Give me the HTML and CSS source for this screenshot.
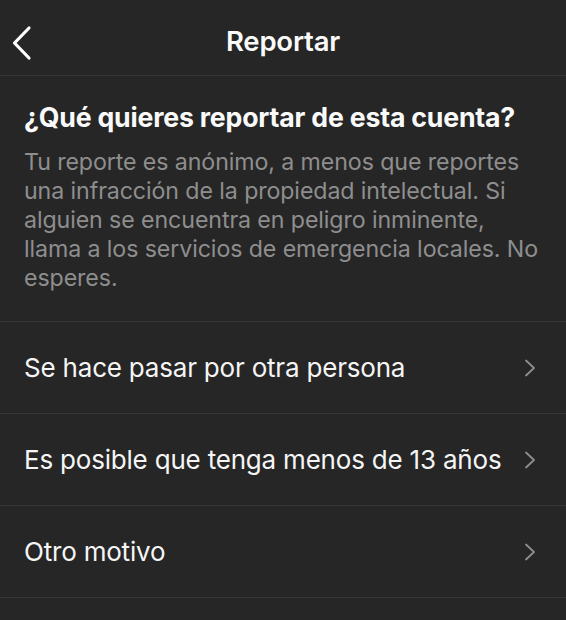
FILE: index.html
```html
<!DOCTYPE html>
<html lang="es">
<head>
<meta charset="utf-8">
<link rel="stylesheet" href="styles.css">
</head>
<body>
<div class="screen">
  <header class="nav">
    <svg class="back" width="22" height="36" viewBox="0 0 22 36"><path d="M18 3 L3.5 18 L18 33" fill="none" stroke="#fff" stroke-width="3.2" stroke-linecap="round" stroke-linejoin="round"/></svg>
    <h1 class="title">Reportar</h1>
  </header>
  <section class="intro">
    <h2 class="question">¿Qué quieres reportar de esta cuenta?</h2>
    <p class="desc">Tu reporte es anónimo, a menos que reportes<br>una infracción de la propiedad intelectual. Si<br>alguien se encuentra en peligro inminente,<br>llama a los servicios de emergencia locales. No<br>esperes.</p>
  </section>
  <ul class="options">
    <li class="option"><span>Se hace pasar por otra persona</span><svg class="chev" width="12" height="18" viewBox="0 0 12 18"><path d="M2 1.5 L10 9 L2 16.5" fill="none" stroke="#8e8e8e" stroke-width="1.8" stroke-linecap="round" stroke-linejoin="round"/></svg></li>
    <li class="option"><span>Es posible que tenga menos de 13 años</span><svg class="chev" width="12" height="18" viewBox="0 0 12 18"><path d="M2 1.5 L10 9 L2 16.5" fill="none" stroke="#8e8e8e" stroke-width="1.8" stroke-linecap="round" stroke-linejoin="round"/></svg></li>
    <li class="option"><span>Otro motivo</span><svg class="chev" width="12" height="18" viewBox="0 0 12 18"><path d="M2 1.5 L10 9 L2 16.5" fill="none" stroke="#8e8e8e" stroke-width="1.8" stroke-linecap="round" stroke-linejoin="round"/></svg></li>
  </ul>
</div>
</body>
</html>
```

FILE: styles.css
```css
html, body {
  margin: 0;
  padding: 0;
  background: #262626;
}
.screen {
  width: 566px;
  height: 620px;
  overflow: hidden;
  background: #262626;
  font-family: Inter, "Noto Sans", sans-serif;
  color: #f5f5f5;
}
.nav {
  position: relative;
  height: 76px;
  box-sizing: border-box;
  padding-top: 7px;
  display: flex;
  align-items: center;
  justify-content: center;
  border-bottom: 1px solid #353535;
}
.back {
  position: absolute;
  left: 11px;
  top: 25px;
}
.title {
  margin: 0;
  font-size: 27.5px;
  font-weight: 600;
  letter-spacing: -0.2px;
  color: #fafafa;
}
.intro {
  padding: 25px 16px 28px 24px;
  border-bottom: 1px solid #353535;
}
.question {
  margin: 0 0 14px 0;
  font-size: 26.7px;
  line-height: 33px;
  font-weight: 700;
  letter-spacing: -0.2px;
  white-space: nowrap;
  color: #fafafa;
}
.desc {
  margin: 0;
  font-size: 23.2px;
  line-height: 29px;
  font-weight: 400;
  white-space: nowrap;
  color: #8e8e8e;
  letter-spacing: -0.1px;
}
.options {
  list-style: none;
  margin: 0;
  padding: 0;
}
.option {
  height: 91px;
  display: flex;
  align-items: center;
  justify-content: space-between;
  padding: 0 30px 0 24px;
  border-bottom: 1px solid #353535;
  font-size: 26px;
  letter-spacing: -0.2px;
  color: #f5f5f5;
}
.chev {
  flex: none;
}
```
